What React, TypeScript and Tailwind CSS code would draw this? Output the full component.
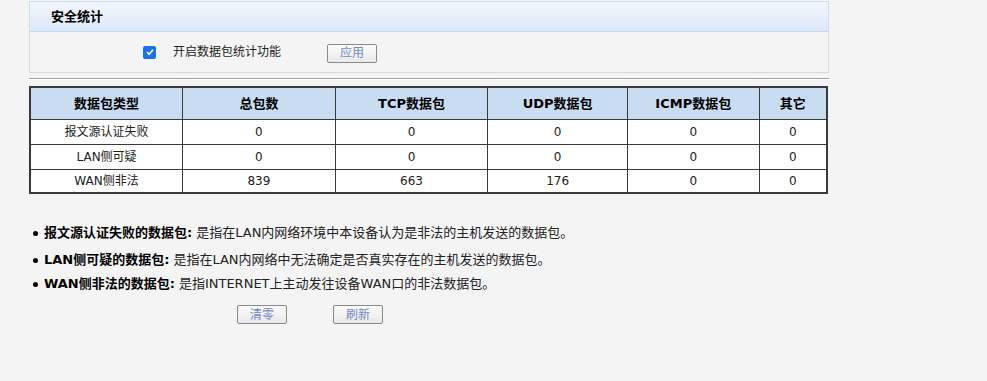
import React from "react";

const cjk = { fontFamily: '"DejaVu Sans", "Noto Sans CJK SC", sans-serif' };

function Btn({ label, w = 50 }: { label: string; w?: number }) {
  return (
    <button
      className="h-[19px] rounded-[2px] border border-[#8a8a8a] bg-gradient-to-b from-[#fbfbfb] to-[#e9e9e9] text-[12px] leading-none text-[#7088c8]"
      style={{ width: w }}
    >
      {label}
    </button>
  );
}

const rows = [
  ["报文源认证失败", "0", "0", "0", "0", "0"],
  ["LAN侧可疑", "0", "0", "0", "0", "0"],
  ["WAN侧非法", "839", "663", "176", "0", "0"],
];
const heads = ["数据包类型", "总包数", "TCP数据包", "UDP数据包", "ICMP数据包", "其它"];
const widths = [153, 153, 153, 140, 132, 68];

export default function App() {
  return (
    <div className="h-[381px] w-full bg-[#f4f4f4] text-black" style={cjk}>
      <div className="ml-[29px] w-[800px] pt-px">
        {/* Section box */}
        <div className="border border-[#cfdcea]">
          <div className="flex h-[30px] items-center border-b border-[#c6d8ee] bg-gradient-to-b from-[#f1f6fd] to-[#dce9f9] pl-[21px] text-[13px] font-bold">
            安全统计
          </div>
          <div className="flex h-[40px] items-center bg-[#f4f4f4]">
            <div className="ml-[113px] flex h-[13px] w-[13px] items-center justify-center rounded-[2px] bg-[#1a73e8]">
              <svg width="10" height="10" viewBox="0 0 10 10">
                <path d="M2 5.2 L4.1 7.2 L8 2.8" stroke="white" strokeWidth="1.7" fill="none" />
              </svg>
            </div>
            <span className="ml-[17px] text-[12px] text-[#222]">开启数据包统计功能</span>
            <div className="ml-[46px]">
              <Btn label="应用" />
            </div>
          </div>
        </div>
        {/* separator */}
        <div className="mt-[5px] h-[2px] border-t border-[#a3a3a3] border-b border-b-[#ffffff]" />
        {/* table */}
        <table className="mt-[6px] w-[799px] border-collapse border-2 border-[#3a3a3a] bg-white text-center">
          <thead>
            <tr className="h-[32px] bg-[#c8ddf1]">
              {heads.map((h, i) => (
                <th
                  key={h}
                  className="border border-[#3a3a3a] p-0 text-[13px] font-bold"
                  style={{ width: widths[i] }}
                >
                  {h}
                </th>
              ))}
            </tr>
          </thead>
          <tbody>
            {rows.map((r, ri) => (
              <tr key={r[0]} className={ri === 2 ? "h-[24px]" : "h-[25px]"}>
                {r.map((c, i) => (
                  <td key={i} className="border border-[#3a3a3a] p-0 text-[12px] text-[#222]">
                    {c}
                  </td>
                ))}
              </tr>
            ))}
          </tbody>
        </table>
        {/* notes */}
        <div className="mt-[30px] flex flex-col gap-[6px] text-[13px]">
          {[
            ["报文源认证失败的数据包:", "是指在LAN内网络环境中本设备认为是非法的主机发送的数据包。"],
            ["LAN侧可疑的数据包:", "是指在LAN内网络中无法确定是否真实存在的主机发送的数据包。"],
            ["WAN侧非法的数据包:", "是指INTERNET上主动发往设备WAN口的非法数据包。"],
          ].map(([b, t], i) => (
            <div key={i} className={`flex items-center ${i === 1 ? "mt-[3px]" : ""} h-[18px]`}>
              <span className="ml-[4px] mr-[6px] inline-block h-[5px] w-[5px] rounded-full bg-black" />
              <span className="font-bold">{b}</span>
              <span className="ml-[4px] text-[#222]">{t}</span>
            </div>
          ))}
        </div>
        <div className="mt-[12px] flex gap-[46px] pl-[208px]">
          <Btn label="清零" />
          <Btn label="刷新" />
        </div>
      </div>
    </div>
  );
}
